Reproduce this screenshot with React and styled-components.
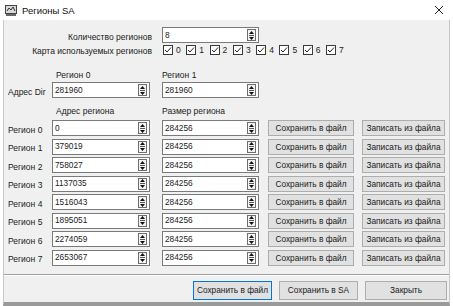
import React from 'react';
import styled, { createGlobalStyle } from 'styled-components';

const GlobalStyle = createGlobalStyle`
  html, body {
    margin: 0;
    padding: 0;
    background: #ffffff;
  }
  * {
    box-sizing: border-box;
  }
`;

const Window = styled.div`
  width: 453px;
  height: 306px;
  display: flex;
  flex-direction: column;
  background: #ffffff;
  font-family: 'Liberation Sans', Arial, sans-serif;
  font-size: 8.5px;
  color: #1a1a1a;
  overflow: hidden;
`;

const TitleBar = styled.div`
  height: 20px;
  display: flex;
  align-items: center;
  padding: 0 8px 0 5px;
  gap: 5px;
`;

const Title = styled.div`
  flex: 1;
  font-size: 9.5px;
  color: #111;
`;

const Close = styled.div`
  width: 12px;
  height: 12px;
  display: flex;
  align-items: center;
  justify-content: center;
`;

const Body = styled.div`
  flex: 1;
  margin: 0 3px;
  background: #f0f0f0;
  border-left: 1px solid #c8c8c8;
  border-right: 1px solid #c8c8c8;
  border-bottom: 4px solid #9a9a9a;
  display: flex;
  flex-direction: column;
`;

const Main = styled.div`
  padding: 7px 0 0 4px;
  display: flex;
  flex-direction: column;
`;

const TopRow = styled.div`
  display: flex;
  align-items: center;
  height: ${p => p.h}px;
`;

const TopLabel = styled.div`
  width: 144px;
  text-align: right;
  padding-top: 3px;
  margin-right: 10px;
`;

const Checks = styled.div`
  display: flex;
  padding-left: 1px;
`;

const CheckItem = styled.div`
  width: 23.3px;
  display: flex;
  align-items: center;
  gap: 3px;
`;

const Box = styled.div`
  width: 10px;
  height: 10px;
  border: 1px solid #3a3a3a;
  background: #fff;
  display: flex;
  align-items: center;
  justify-content: center;
`;

const HeadRow = styled.div`
  display: flex;
  height: 14px;
  align-items: flex-end;
  padding-left: 48px;
  margin-top: ${p => p.mt || 0}px;
`;

const Head = styled.div`
  width: 106px;
  padding-bottom: 1px;
`;

const Rows = styled.div`
  display: flex;
  flex-direction: column;
  gap: 2.57px;
  margin-top: 3px;
`;

const FieldRow = styled.div`
  display: flex;
  align-items: center;
  height: 16px;
  margin-top: ${p => p.mt || 0}px;
`;

const RowLabel = styled.div`
  width: 44px;
  padding-top: 3px;
`;

const Field = styled.div`
  width: ${p => p.w}px;
  height: 16px;
  margin-right: ${p => p.mr || 0}px;
  background: #fff;
  border: 1px solid #7a7a7a;
  display: flex;
  align-items: center;
  padding: 0 1px 0 2px;
`;

const FieldText = styled.span`
  flex: 1;
  font-size: 8.3px;
  padding-bottom: 1px;
`;

const SpinBox = styled.div`
  width: 9px;
  height: 12px;
  border: 1px solid #6d6d6d;
  background: #f4f4f4;
  display: flex;
  flex-direction: column;
  align-items: center;
  justify-content: space-around;
  margin-right: 1px;
`;

const Button = styled.button`
  width: ${p => p.w}px;
  height: ${p => p.h || 16}px;
  margin-right: ${p => p.mr || 0}px;
  background: #e1e1e1;
  border: 1px solid ${p => (p.primary ? '#0078d7' : '#adadad')};
  font-family: inherit;
  font-size: 8.3px;
  color: #1a1a1a;
  padding: 0;
`;

const Separator = styled.div`
  height: 2px;
  background: #a0a0a0;
  margin-top: 8px;
  border-bottom: 1px solid #ffffff;
`;

const Footer = styled.div`
  display: flex;
  justify-content: flex-end;
  padding: 5px 2px 0 0;
`;

const Spin = ({ value, w, mr }) => (
  <Field w={w} mr={mr}>
    <FieldText>{value}</FieldText>
    <SpinBox>
      <svg width="5" height="3" viewBox="0 0 5 3"><path d="M2.5 0 L5 3 L0 3 Z" fill="#111" /></svg>
      <svg width="5" height="1" viewBox="0 0 5 1"><rect width="5" height="1" fill="#555" /></svg>
      <svg width="5" height="3" viewBox="0 0 5 3"><path d="M0 0 L5 0 L2.5 3 Z" fill="#111" /></svg>
    </SpinBox>
  </Field>
);

const addresses = ['0', '379019', '758027', '1137035', '1516043', '1895051', '2274059', '2653067'];

export default function App() {
  return (
    <Window>
      <GlobalStyle />
      <TitleBar>
        <svg width="12" height="11" viewBox="0 0 12 11">
          <rect x="0.5" y="0.5" width="11" height="8" fill="#d8d8d8" stroke="#444" />
          <path d="M2 6 L4 3 L6 5 L8 2 L10 6" fill="none" stroke="#333" strokeWidth="1" />
          <rect x="1" y="9" width="10" height="2" fill="#666" />
        </svg>
        <Title>Регионы SA</Title>
        <Close>
          <svg width="10" height="10" viewBox="0 0 10 10">
            <path d="M1 1 L9 9 M9 1 L1 9" stroke="#222" strokeWidth="1" />
          </svg>
        </Close>
      </TitleBar>
      <Body>
        <Main>
          <TopRow h={16}>
            <TopLabel>Количество регионов</TopLabel>
            <Spin value="8" w={97} />
          </TopRow>
          <TopRow h={13}>
            <TopLabel>Карта используемых регионов</TopLabel>
            <Checks>
              {[0, 1, 2, 3, 4, 5, 6, 7].map(i => (
                <CheckItem key={i}>
                  <Box>
                    <svg width="8" height="8" viewBox="0 0 8 8">
                      <path d="M1 4 L3 6 L7 1.5" fill="none" stroke="#222" strokeWidth="1" />
                    </svg>
                  </Box>
                  <span>{i}</span>
                </CheckItem>
              ))}
            </Checks>
          </TopRow>
          <HeadRow mt={11}>
            <Head>Регион 0</Head>
            <Head>Регион 1</Head>
          </HeadRow>
          <FieldRow mt={1}>
            <RowLabel>Адрес Dir</RowLabel>
            <Spin value="281960" w={98} mr={12} />
            <Spin value="281960" w={97} />
          </FieldRow>
          <HeadRow mt={5}>
            <Head>Адрес региона</Head>
            <Head>Размер региона</Head>
          </HeadRow>
          <Rows>
            {addresses.map((a, i) => (
              <FieldRow key={i}>
                <RowLabel>Регион {i}</RowLabel>
                <Spin value={a} w={98} mr={12} />
                <Spin value="284256" w={97} mr={9} />
                <Button w={86} mr={8}>Сохранить в файл</Button>
                <Button w={83}>Записать из файла</Button>
              </FieldRow>
            ))}
          </Rows>
        </Main>
        <Separator />
        <Footer>
          <Button w={79} h={19} mr={7} primary>Сохранить в файл</Button>
          <Button w={79} h={19} mr={7}>Сохранить в SA</Button>
          <Button w={82} h={19}>Закрыть</Button>
        </Footer>
      </Body>
    </Window>
  );
}
